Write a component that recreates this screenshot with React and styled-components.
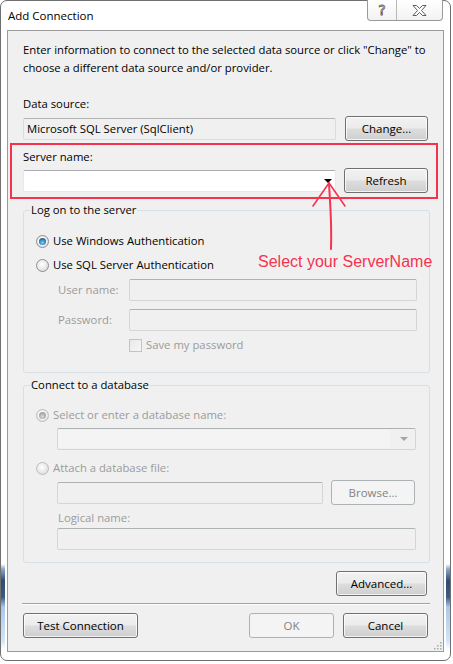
import React from 'react';
import styled, { createGlobalStyle } from 'styled-components';

const GlobalStyle = createGlobalStyle`
  html, body {
    margin: 0;
    padding: 0;
    background: #fff;
  }
  body {
    font-family: "Open Sans", "Noto Sans", sans-serif;
    font-size: 11.3px;
    color: #000;
  }
  * {
    box-sizing: border-box;
  }
`;

const glass =
  'linear-gradient(180deg, transparent 563px, #8aa6cc 568px, #2f4b73 580px, #3a5a85 596px, #a9c8ea 606px, #d3e5f7 640px, transparent 648px)';

const Window = styled.div`
  width: 451px;
  height: 661px;
  border: 1px solid #6f6f6f;
  border-radius: 7px;
  background: ${glass} left top / 4px 100% no-repeat, ${glass} right top / 4px 100% no-repeat, #fff;
  padding: 0 6px 8px;
  display: flex;
  flex-direction: column;
`;

const TitleBar = styled.div`
  height: 29px;
  display: flex;
  align-items: flex-start;
  justify-content: space-between;
`;

const Title = styled.div`
  padding: 7px 0 0 1px;
  font-size: 11.5px;
  line-height: 16px;
`;

const Caption = styled.div`
  display: flex;
  margin: -1px 1px 0 0;
  height: 21px;
  border: 1px solid #9a9a9a;
  border-top: none;
  border-radius: 0 0 4px 4px;
  background: linear-gradient(#ffffff, #f2f2f2);
`;

const CaptionButton = styled.div`
  width: ${p => p.$w}px;
  display: flex;
  align-items: center;
  justify-content: center;
  & + & {
    border-left: 1px solid #b8b8b8;
  }
`;

const HelpGlyph = styled.span`
  font-family: "DejaVu Sans", sans-serif;
  font-size: 14px;
  line-height: 14px;
  color: #fff;
  -webkit-text-stroke: 0.8px #5c5c5c;
`;

const Panel = styled.div`
  position: relative;
  flex: 1;
  border: 1px solid #9b9b9b;
  background: #f0f0f0;
  padding: 10px 15px 0;
  display: flex;
  flex-direction: column;
`;

const Intro = styled.p`
  margin: 0;
  line-height: 18px;
`;

const Label = styled.div`
  line-height: 16px;
  margin-top: ${p => p.$mt || 0}px;
  padding-left: ${p => p.$indent || 0}px;
  color: ${p => (p.$disabled ? '#9b9b9b' : '#000')};
`;

const Row = styled.div`
  display: flex;
  align-items: center;
  gap: ${p => p.$gap ?? 8}px;
  margin-top: ${p => p.$mt || 0}px;
  padding-left: ${p => p.$indent || 0}px;
  justify-content: ${p => p.$justify || 'flex-start'};
`;

const TextBox = styled.div`
  flex: 1;
  height: 22px;
  border: 1px solid #e3e9ef;
  border-top-color: #abadb3;
  border-radius: 2px;
  background: ${p => (p.$disabled ? '#f0f0f0' : '#fff')};
  display: flex;
  align-items: center;
  padding: 0 3px;
  line-height: 16px;
  color: #000;
  ${p =>
    p.$disabled &&
    `
    border-color: #d5d5d5;
    border-top-color: #adb2b5;
  `}
`;

const ReadOnlyBox = styled(TextBox)`
  background: #f0f0f0;
  border-color: #dcdcdc;
  border-top-color: #b4b4b4;
`;

const ComboBox = styled(TextBox)`
  justify-content: flex-end;
  padding: 0 3px 0 0;
`;

const DropArrow = styled.span`
  width: 0;
  height: 0;
  border-left: 4px solid transparent;
  border-right: 4px solid transparent;
  border-top: 4px solid ${p => (p.$disabled ? '#a6a6a6' : '#000')};
  margin-right: ${p => (p.$disabled ? 4 : 0)}px;
`;

const ComboField = styled.div`
  flex: 1;
  align-self: stretch;
  margin: 1px 10px 1px 0;
  background: #f4f4f4;
`;

const Button = styled.div`
  flex: none;
  width: ${p => p.$w}px;
  height: 25px;
  margin-right: ${p => p.$mr || 0}px;
  border: 1px solid #707070;
  border-radius: 3px;
  background: linear-gradient(#f2f2f2 0%, #ebebeb 48%, #dddddd 52%, #cfcfcf 100%);
  box-shadow: inset 0 0 0 1px rgba(255, 255, 255, 0.75);
  display: flex;
  align-items: center;
  justify-content: center;
  font-size: 11.5px;
  color: #000;
  ${p =>
    p.$disabled &&
    `
    border-color: #adb2b5;
    background: #f4f4f4;
    box-shadow: none;
    color: #838383;
  `}
`;

const ServerSection = styled.div`
  position: relative;
  margin-top: 8px;
`;

const Highlight = styled.div`
  position: absolute;
  top: -6px;
  bottom: -6px;
  left: -13px;
  right: -10px;
  border: 2px solid #f5334f;
  pointer-events: none;
`;

const ArrowSvg = styled.svg`
  position: absolute;
  left: 285px;
  top: 34px;
  overflow: visible;
`;

const Callout = styled.div`
  position: absolute;
  left: 235px;
  top: 103px;
  white-space: nowrap;
  font-family: "Liberation Sans", Arial, sans-serif;
  font-size: 16px;
  line-height: 20px;
  color: #f5334f;
`;

const Group = styled.fieldset`
  margin: ${p => p.$mt || 0}px -2px 0 0;
  padding: 0 ${p => p.$pr || 12}px ${p => p.$pb || 0}px 12px;
  border: 1px solid #d5dfe5;
  border-radius: 3px;
  min-width: 0;
`;

const Legend = styled.legend`
  margin-left: -6px;
  padding: 0 1px;
  line-height: 16px;
`;

const Option = styled.div`
  display: flex;
  align-items: center;
  gap: 4px;
  line-height: 18px;
  margin-top: ${p => p.$mt || 0}px;
  color: ${p => (p.$disabled ? '#9b9b9b' : '#000')};
`;

const Radio = styled.span`
  flex: none;
  width: 13px;
  height: 13px;
  border-radius: 50%;
  border: 1px solid ${p => (p.$disabled ? '#bcbcbc' : '#8e8f8f')};
  background: radial-gradient(circle at 45% 40%, #ffffff 0%, #e8e8e8 55%, #cfcfcf 100%);
  display: flex;
  align-items: center;
  justify-content: center;
  &::after {
    content: '';
    display: ${p => (p.$checked ? 'block' : 'none')};
    width: 7px;
    height: 7px;
    border-radius: 50%;
    background: ${p =>
      p.$disabled
        ? 'radial-gradient(circle at 50% 65%, #d8d8d8 0%, #a8a8a8 60%, #8e8e8e 100%)'
        : 'radial-gradient(circle at 50% 65%, #7fd3f6 0%, #2a7cb8 55%, #123e66 100%)'};
    box-shadow: 0 0 0 1px rgba(255, 255, 255, 0.6);
  }
`;

const Check = styled.span`
  flex: none;
  width: 13px;
  height: 13px;
  border: 1px solid #c3c3c3;
  background: linear-gradient(135deg, #e9e9e9, #f6f6f6);
`;

const FieldLabel = styled.span`
  width: 71px;
  flex: none;
  color: #9b9b9b;
  line-height: 16px;
`;

const Separator = styled.div`
  height: 1px;
  background: #a0a0a0;
  margin: 7px -2px 0 -1px;
  border-bottom: 1px solid #fff;
  box-sizing: content-box;
`;

const Grip = styled.svg`
  position: absolute;
  right: 1px;
  bottom: 1px;
`;

const gripDots = [
  [7, 1],
  [4, 4],
  [7, 4],
  [1, 7],
  [4, 7],
  [7, 7],
];

export default function App() {
  return (
    <>
      <GlobalStyle />
      <Window>
        <TitleBar>
          <Title>Add Connection</Title>
          <Caption>
            <CaptionButton $w={28}>
              <HelpGlyph>?</HelpGlyph>
            </CaptionButton>
            <CaptionButton $w={46}>
              <svg width="15" height="11" viewBox="0 0 15 11">
                <polygon
                  points="1,0.5 4.5,0.5 7.5,3.5 10.5,0.5 14,0.5 9.5,5.5 14,10.5 10.5,10.5 7.5,7.5 4.5,10.5 1,10.5 5.5,5.5"
                  fill="#fff"
                  stroke="#5c5c5c"
                  strokeWidth="1"
                  strokeLinejoin="round"
                />
              </svg>
            </CaptionButton>
          </Caption>
        </TitleBar>

        <Panel>
          <Intro>
            Enter information to connect to the selected data source or click "Change" to
            <br />
            choose a different data source and/or provider.
          </Intro>

          <Label $mt={19}>Data source:</Label>
          <Row $mt={4} $gap={9}>
            <ReadOnlyBox>Microsoft SQL Server (SqlClient)</ReadOnlyBox>
            <Button $w={83}>Change...</Button>
          </Row>

          <ServerSection>
            <Label>Server name:</Label>
            <Row $mt={3} $gap={8}>
              <ComboBox>
                <DropArrow />
              </ComboBox>
              <Button $w={84}>Refresh</Button>
            </Row>
            <Highlight />
            <ArrowSvg width="60" height="80" viewBox="0 0 60 80">
              <path
                d="M21 0 C 22 20, 24 40, 23 66"
                fill="none"
                stroke="#f5334f"
                strokeWidth="2"
                strokeLinecap="round"
              />
              <path
                d="M5 23 L21 0 L37 23"
                fill="none"
                stroke="#f5334f"
                strokeWidth="1.6"
                strokeLinecap="round"
                strokeLinejoin="round"
              />
            </ArrowSvg>
            <Callout>Select your ServerName</Callout>
          </ServerSection>

          <Group $mt={9} $pb={19}>
            <Legend>Log on to the server</Legend>
            <Option $mt={14}>
              <Radio $checked />
              Use Windows Authentication
            </Option>
            <Option $mt={6}>
              <Radio />
              Use SQL Server Authentication
            </Option>
            <Row $mt={5} $gap={0} $indent={22}>
              <FieldLabel>User name:</FieldLabel>
              <TextBox $disabled />
            </Row>
            <Row $mt={8} $gap={0} $indent={22}>
              <FieldLabel>Password:</FieldLabel>
              <TextBox $disabled />
            </Row>
            <Row $mt={6} $gap={4} $indent={93}>
              <Check />
              <Label $disabled>Save my password</Label>
            </Row>
          </Group>

          <Group $mt={4} $pb={12} $pr={13}>
            <Legend>Connect to a database</Legend>
            <Option $mt={13} $disabled>
              <Radio $checked $disabled />
              Select or enter a database name:
            </Option>
            <Row $mt={4} $gap={0} $indent={21}>
              <ComboBox $disabled>
                <ComboField />
                <DropArrow $disabled />
              </ComboBox>
            </Row>
            <Option $mt={9} $disabled>
              <Radio $disabled />
              Attach a database file:
            </Option>
            <Row $mt={3} $gap={8} $indent={21}>
              <TextBox $disabled />
              <Button $w={84} $mr={1} $disabled>Browse...</Button>
            </Row>
            <Label $mt={5} $disabled $indent={22}>Logical name:</Label>
            <Row $mt={2} $gap={0} $indent={21}>
              <TextBox $disabled />
            </Row>
          </Group>

          <Row $mt={8} $justify="flex-end">
            <Button $w={91} $mr={1}>Advanced...</Button>
          </Row>

          <Separator />

          <Row $mt={8} $justify="space-between">
            <Button $w={115}>Test Connection</Button>
            <Row $gap={9}>
              <Button $w={85} $disabled>OK</Button>
              <Button $w={85}>Cancel</Button>
            </Row>
          </Row>

          <Grip width="9" height="9" viewBox="0 0 9 9">
            {gripDots.map(([x, y]) => (
              <rect key={`${x}-${y}`} x={x} y={y} width="1.5" height="1.5" fill="#a8a8a8" />
            ))}
          </Grip>
        </Panel>
      </Window>
    </>
  );
}
